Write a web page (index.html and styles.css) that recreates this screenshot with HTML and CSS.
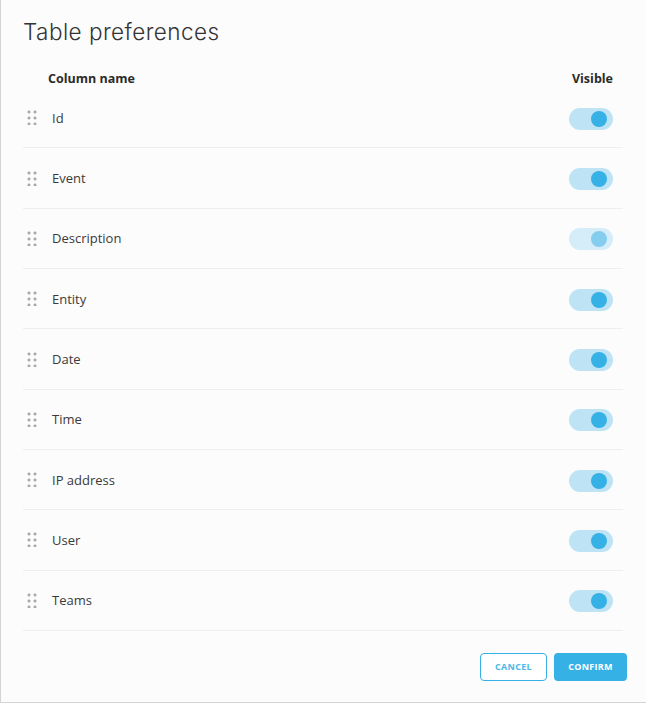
FILE: index.html
```html
<!DOCTYPE html>
<html lang="en">
<head>
  <meta charset="UTF-8" />
  <meta name="viewport" content="width=device-width, initial-scale=1.0" />
  <title>Table preferences</title>
  <link rel="stylesheet" href="styles.css">
</head>
<body>
  <div class="dialog">
    <h1>Table preferences</h1>

    <div class="table-head">
      <span>Column name</span>
      <span>Visible</span>
    </div>

    <div class="columns">
      <div class="column-row">
        <span class="handle"></span>
        <span class="name">Id</span>
        <label class="toggle on"><span class="knob"></span></label>
      </div>
      <div class="column-row">
        <span class="handle"></span>
        <span class="name">Event</span>
        <label class="toggle on"><span class="knob"></span></label>
      </div>
      <div class="column-row">
        <span class="handle"></span>
        <span class="name">Description</span>
        <label class="toggle on disabled"><span class="knob"></span></label>
      </div>
      <div class="column-row">
        <span class="handle"></span>
        <span class="name">Entity</span>
        <label class="toggle on"><span class="knob"></span></label>
      </div>
      <div class="column-row">
        <span class="handle"></span>
        <span class="name">Date</span>
        <label class="toggle on"><span class="knob"></span></label>
      </div>
      <div class="column-row">
        <span class="handle"></span>
        <span class="name">Time</span>
        <label class="toggle on"><span class="knob"></span></label>
      </div>
      <div class="column-row">
        <span class="handle"></span>
        <span class="name">IP address</span>
        <label class="toggle on"><span class="knob"></span></label>
      </div>
      <div class="column-row">
        <span class="handle"></span>
        <span class="name">User</span>
        <label class="toggle on"><span class="knob"></span></label>
      </div>
      <div class="column-row">
        <span class="handle"></span>
        <span class="name">Teams</span>
        <label class="toggle on"><span class="knob"></span></label>
      </div>
    </div>

    <div class="actions">
      <button class="btn btn-outline">Cancel</button>
      <button class="btn btn-primary">Confirm</button>
    </div>
  </div>
</body>
</html>
```

FILE: styles.css
```css
:root {
  --blue: #35b1e6;
  --blue-light: #bee3f5;
  --line: #efefef;
}

* {
  box-sizing: border-box;
}

body {
  margin: 0;
  font-family: 'Open Sans', 'Noto Sans', sans-serif;
  color: #333;
  background: #fff;
}

.dialog {
  height: 703px;
  background: #fcfcfc;
  border-left: 1px solid #d4d4d4;
  border-bottom: 1px solid #d4d4d4;
  padding: 0 23px 0 22px;
  display: flex;
  flex-direction: column;
}

.dialog h1 {
  font-family: 'Inter', 'Lato', sans-serif;
  font-weight: 300;
  font-size: 22.5px;
  letter-spacing: 0.45px;
  color: #333;
  margin: 18px 0 0;
  line-height: 28px;
}

.table-head {
  display: flex;
  justify-content: space-between;
  align-items: center;
  height: 18.4px;
  margin-top: 23.8px;
  padding: 0 10px 0 25px;
  font-size: 12.5px;
  font-weight: 700;
  color: #2b2b2b;
}

.column-row {
  display: flex;
  align-items: center;
  height: 60.3px;
  border-bottom: 1px solid var(--line);
  padding: 0 10px 0 4px;
}

/* six dot grip for dragging */
.handle {
  width: 10px;
  height: 15px;
  background-image: radial-gradient(circle, #a9a9a9 1.4px, transparent 1.7px);
  background-size: 6px 6px;
  background-position: -1px -1px;
  margin-right: 15px;
  flex-shrink: 0;
}

.name {
  flex: 1;
  font-size: 13px;
  color: #3a3a3a;
}

.toggle {
  position: relative;
  width: 44px;
  height: 22px;
  border-radius: 11px;
  background: var(--blue-light);
  margin-top: 2px;
}

.toggle .knob {
  position: absolute;
  top: 3px;
  left: 3px;
  width: 16px;
  height: 16px;
  border-radius: 50%;
  background: var(--blue);
}

.toggle.on .knob {
  left: 22px;
}

.toggle.disabled {
  background: #d5edf9;
}

.toggle.disabled .knob {
  background: #84cdef;
}

.actions {
  display: flex;
  justify-content: flex-end;
  gap: 7px;
  margin: 22px -4px 0 0;
}

.btn {
  height: 28px;
  border-radius: 4px;
  font-family: 'Open Sans', sans-serif;
  font-size: 9px;
  font-weight: 700;
  text-transform: uppercase;
  letter-spacing: 0.3px;
  cursor: pointer;
}

.btn-outline {
  width: 67px;
  background: #fff;
  color: #4bb9e8;
  border: 1px solid var(--blue);
}

.btn-primary {
  width: 73px;
  background: var(--blue);
  color: #fff;
  border: none;
}
```
